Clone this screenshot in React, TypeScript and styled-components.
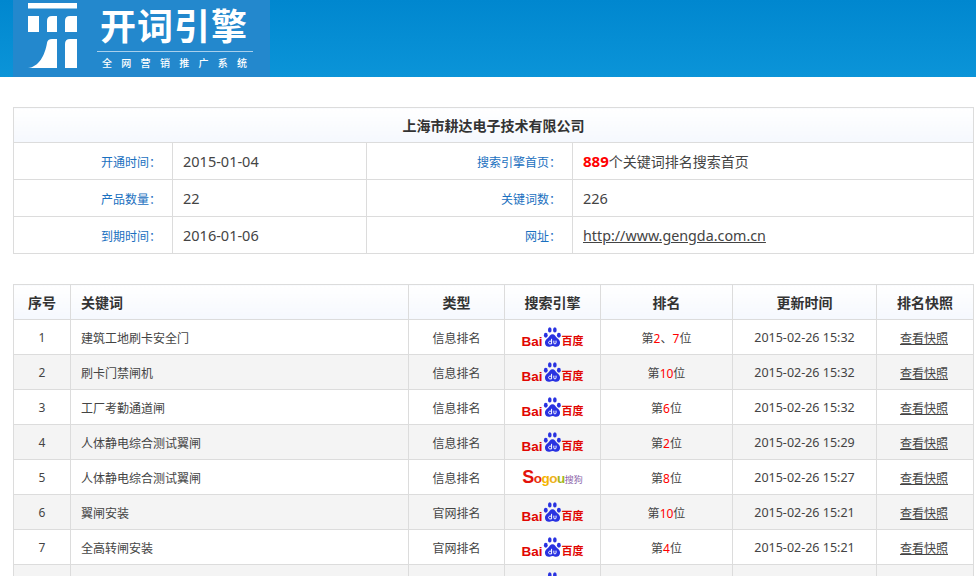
import React from 'react';
import styled, { createGlobalStyle } from 'styled-components';

const FONT = '"Noto Sans", "Noto Sans CJK SC", sans-serif';

interface IRank {
  name: string;
  type: string;
  engine: 'baidu' | 'sogou';
  rank: string[];
  time: string;
}

const ranks: IRank[] = [
  { name: '建筑工地刷卡安全门', type: '信息排名', engine: 'baidu', rank: ['2', '7'], time: '2015-02-26 15:32' },
  { name: '刷卡门禁闸机', type: '信息排名', engine: 'baidu', rank: ['10'], time: '2015-02-26 15:32' },
  { name: '工厂考勤通道闸', type: '信息排名', engine: 'baidu', rank: ['6'], time: '2015-02-26 15:32' },
  { name: '人体静电综合测试翼闸', type: '信息排名', engine: 'baidu', rank: ['2'], time: '2015-02-26 15:29' },
  { name: '人体静电综合测试翼闸', type: '信息排名', engine: 'sogou', rank: ['8'], time: '2015-02-26 15:27' },
  { name: '翼闸安装', type: '官网排名', engine: 'baidu', rank: ['10'], time: '2015-02-26 15:21' },
  { name: '全高转闸安装', type: '官网排名', engine: 'baidu', rank: ['4'], time: '2015-02-26 15:21' },
];

const GlobalStyle = createGlobalStyle`
  html, body {
    margin: 0;
    height: 576px;
    overflow: hidden;
    background: #fff;
    font-family: ${FONT};
    color: #444;
  }
`;

const Header = styled.header`
  height: 77px;
  padding-left: 13px;
  background: linear-gradient(to bottom, #0087cf, #0b94d8);
`;

const LogoBlock = styled.div`
  width: 257px;
  height: 77px;
  box-sizing: border-box;
  padding: 3px 0 0 15px;
  display: flex;
  gap: 20px;
  background: #2388cd;
  overflow: hidden;
`;

const LogoWords = styled.div`
  width: 156px;
  padding-top: 4px;
  color: #fff;
`;

const LogoName = styled.div`
  font-size: 36px;
  line-height: 40px;
  height: 44px;
  font-weight: 700;
  letter-spacing: 1px;
  white-space: nowrap;
  margin-left: 3px;
`;

const LogoSlogan = styled.div`
  border-top: 1px solid #a9d0ec;
  padding: 4px 0 0 5px;
  font-size: 10px;
  font-weight: 500;
  line-height: 14px;
  letter-spacing: 9.3px;
  white-space: nowrap;
`;

const Main = styled.main`
  padding: 30px 3px 0 13px;
`;

const Table = styled.table`
  width: 960px;
  table-layout: fixed;
  border-collapse: collapse;
  border: 1px solid #dcdcdc;
`;

const InfoTable = styled(Table)`
  margin-bottom: 30px;
`;

const HeadCell = styled.th<{ $left?: boolean }>`
  height: 34px;
  padding: 0 0 0 ${(p) => (p.$left ? '10px' : '0')};
  border: 1px solid #dcdcdc;
  background: linear-gradient(to bottom, #fff, #f5f8fe);
  color: #333;
  font-size: 14px;
  font-weight: 700;
  text-align: ${(p) => (p.$left ? 'left' : 'center')};
`;

const Label = styled.td`
  height: 35px;
  padding: 1px 11px 0 0;
  border: 1px solid #dcdcdc;
  color: #1a70c0;
  font-size: 12px;
  text-align: right;
`;

const Value = styled.td`
  height: 36px;
  padding: 0 0 0 10px;
  border: 1px solid #dcdcdc;
  font-size: 14.5px;
`;

const Strong = styled.b`
  color: #f00;
  font-size: 15px;
`;

const Note = styled.span`
  font-size: 14px;
`;

const SiteLink = styled.a`
  color: #444;
  font-size: 14.3px;
  text-decoration: underline;
`;

const Row = styled.tr<{ $even: boolean }>`
  background: ${(p) => (p.$even ? '#f4f4f4' : '#fff')};
`;

const Cell = styled.td<{ $left?: boolean }>`
  height: 33px;
  padding: 1px 0 0 ${(p) => (p.$left ? '10px' : '0')};
  border: 1px solid #dcdcdc;
  font-size: 12px;
  text-align: ${(p) => (p.$left ? 'left' : 'center')};
  white-space: nowrap;
`;

const TimeCell = styled(Cell)`
  font-size: 12.5px;
`;

const Hit = styled.span`
  color: #f00;
`;

const BaiduMark = styled.span`
  display: inline-flex;
  align-items: flex-end;
  height: 20px;
  margin-bottom: 2px;
  vertical-align: middle;
`;

const BaiduLatin = styled.span`
  font-family: "Liberation Sans", sans-serif;
  font-size: 13.5px;
  line-height: 11px;
  font-weight: 700;
  color: #e10601;
`;

const BaiduCjk = styled.span`
  font-size: 11px;
  line-height: 12px;
  font-weight: 700;
  color: #e10601;
`;

const SogouMark = styled.span`
  display: inline-flex;
  align-items: baseline;
  font-family: "Liberation Sans", sans-serif;
  font-weight: 700;
  font-size: 13.5px;
  letter-spacing: -0.5px;
`;

const SogouLetter = styled.span<{ $color: string; $big?: boolean }>`
  color: ${(p) => p.$color};
  font-size: ${(p) => (p.$big ? '18px' : 'inherit')};
`;

const SogouCjk = styled.span`
  font-family: ${FONT};
  font-size: 9px;
  font-weight: 400;
  letter-spacing: 0;
  color: #8a5fa8;
`;

const Shot = styled.a`
  color: #444;
  text-decoration: underline;
  margin-right: 2px;
`;

const Paw = () => (
  <svg width="19" height="20" viewBox="0 0 20 22" aria-hidden="true">
    <g fill="#2932e1">
      <ellipse cx="2.600" cy="9" rx="2.100" ry="2.700" />
      <ellipse cx="7" cy="3.200" rx="2" ry="2.800" />
      <ellipse cx="12.600" cy="3.200" rx="2" ry="2.800" />
      <ellipse cx="17" cy="9" rx="2.100" ry="2.700" />
      <path d="M10 8c2.500 0 3.200 2.400 5 4 2 1.700 3.500 3 3.300 5.500C18 21 15.500 22 13 21.600c-1.300-.2-2-.6-3-.6s-1.800.4-3 .6C4.500 22 2 21 1.700 17.500 1.500 15 3 13.700 5 12c1.800-1.600 2.500-4 5-4z" />
    </g>
    <path d="M9 13v5.600H7.300c-1 0-1.700-.7-1.700-1.500s.7-1.500 1.700-1.500H9M11.500 15v2.400c0 .8.500 1.200 1.200 1.200s1.200-.4 1.200-1.200V15" fill="none" stroke="#fff" strokeWidth="1.100" />
  </svg>
);

const Baidu = () => (
  <BaiduMark>
    <BaiduLatin>Bai</BaiduLatin>
    <Paw />
    <BaiduCjk>百度</BaiduCjk>
  </BaiduMark>
);

const Sogou = () => (
  <SogouMark>
    <SogouLetter $color="#e3120b" $big>S</SogouLetter>
    <SogouLetter $color="#e8300c">o</SogouLetter>
    <SogouLetter $color="#f5b400">g</SogouLetter>
    <SogouLetter $color="#eeb21a">o</SogouLetter>
    <SogouLetter $color="#a3b71a">u</SogouLetter>
    <SogouCjk>搜狗</SogouCjk>
  </SogouMark>
);

const LogoGlyph = () => (
  <svg width="49" height="65" viewBox="0 0 49 65" aria-hidden="true">
    <g fill="#fff">
      <rect x="0" y="0" width="49" height="5.500" />
      <rect x="0" y="13" width="11" height="16" />
      <path d="M19 29V18q0-5 5-5h5v16z" />
      <path d="M37 29V18q0-5 5-5h7v16z" />
      <path d="M29 36v29H0c11-1 17-13 19-25q.5-4 5-4z" />
      <path d="M37 65V41q0-5 5-5h7v29z" />
    </g>
  </svg>
);

const App = () => (
  <>
    <GlobalStyle />
    <Header>
      <LogoBlock>
        <LogoGlyph />
        <LogoWords>
          <LogoName>开词引擎</LogoName>
          <LogoSlogan>全网营销推广系统</LogoSlogan>
        </LogoWords>
      </LogoBlock>
    </Header>
    <Main>
      <InfoTable>
        <colgroup>
          <col width="159" />
          <col width="194" />
          <col width="206" />
          <col width="401" />
        </colgroup>
        <tbody>
          <tr>
            <HeadCell colSpan={4}>上海市耕达电子技术有限公司</HeadCell>
          </tr>
          <tr>
            <Label>开通时间：</Label>
            <Value>2015-01-04</Value>
            <Label>搜索引擎首页：</Label>
            <Value>
              <Strong>889</Strong>
              <Note>个关键词排名搜索首页</Note>
            </Value>
          </tr>
          <tr>
            <Label>产品数量：</Label>
            <Value>22</Value>
            <Label>关键词数：</Label>
            <Value>226</Value>
          </tr>
          <tr>
            <Label>到期时间：</Label>
            <Value>2016-01-06</Value>
            <Label>网址：</Label>
            <Value>
              <SiteLink href="#">http://www.gengda.com.cn</SiteLink>
            </Value>
          </tr>
        </tbody>
      </InfoTable>
      <Table>
        <colgroup>
          <col width="57" />
          <col width="338" />
          <col width="96" />
          <col width="96" />
          <col width="132" />
          <col width="144" />
          <col width="97" />
        </colgroup>
        <thead>
          <tr>
            <HeadCell>序号</HeadCell>
            <HeadCell $left>关键词</HeadCell>
            <HeadCell>类型</HeadCell>
            <HeadCell>搜索引擎</HeadCell>
            <HeadCell>排名</HeadCell>
            <HeadCell>更新时间</HeadCell>
            <HeadCell>排名快照</HeadCell>
          </tr>
        </thead>
        <tbody>
          {ranks.map((item, index) => (
            <Row key={index} $even={index % 2 === 1}>
              <Cell>{index + 1}</Cell>
              <Cell $left>{item.name}</Cell>
              <Cell>{item.type}</Cell>
              <Cell>{item.engine === 'baidu' ? <Baidu /> : <Sogou />}</Cell>
              <Cell>
                第
                {item.rank.map((r, i) => (
                  <React.Fragment key={r}>
                    {i > 0 && '、'}
                    <Hit>{r}</Hit>
                  </React.Fragment>
                ))}
                位
              </Cell>
              <TimeCell>{item.time}</TimeCell>
              <Cell>
                <Shot href="#">查看快照</Shot>
              </Cell>
            </Row>
          ))}
          {/* the eighth row is cut by the window, only the top of its logo shows */}
          <Row $even>
            <Cell />
            <Cell $left />
            <Cell />
            <Cell>
              <BaiduMark>
                <Paw />
              </BaiduMark>
            </Cell>
            <Cell />
            <TimeCell />
            <Cell />
          </Row>
        </tbody>
      </Table>
    </Main>
  </>
);

export default App;
